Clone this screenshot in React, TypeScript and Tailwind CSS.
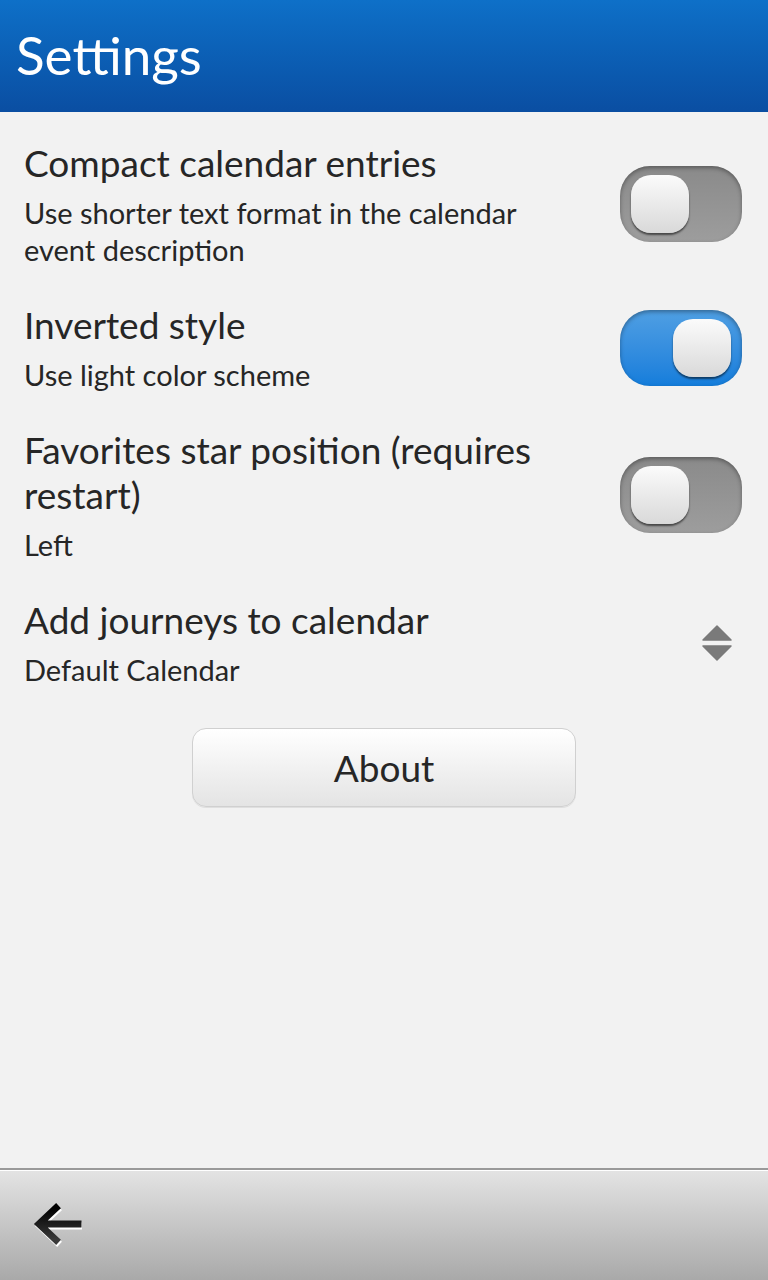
import React from 'react';

const font = { fontFamily: 'Lato, "Open Sans", sans-serif' };

function Toggle({ on }: { on: boolean }) {
  return (
    <div
      className={
        'relative h-[76px] w-[122px] shrink-0 rounded-[30px] shadow-[inset_0_2px_4px_rgba(0,0,0,0.35)] ' +
        (on
          ? 'bg-gradient-to-b from-[#4f9fe3] to-[#137ddb]'
          : 'bg-gradient-to-b from-[#8a8a8a] to-[#9d9d9d]')
      }
    >
      <div
        className={
          'absolute top-[9px] h-[58px] w-[58px] rounded-[20px] bg-gradient-to-b from-[#fbfbfb] to-[#d9d9d9] shadow-[0_2px_2px_rgba(0,0,0,0.55)] ' +
          (on ? 'left-[53px]' : 'left-[11px]')
        }
      />
    </div>
  );
}

function Row({
  title,
  desc,
  right,
}: {
  title: React.ReactNode;
  desc: React.ReactNode;
  right: React.ReactNode;
}) {
  return (
    <div className="flex items-center justify-between pl-6 pr-[26px]">
      <div className="flex w-[560px] flex-col">
        <div className="text-[37px] leading-[45px] text-[#262626]">{title}</div>
        <div className="mt-[9px] text-[29px] leading-[37px] text-[#262626]">{desc}</div>
      </div>
      {right}
    </div>
  );
}

export default function App() {
  return (
    <div className="flex h-[1280px] w-[768px] flex-col bg-[#f2f2f2]" style={font}>
      <div className="flex h-[112px] items-center bg-gradient-to-b from-[#0e70c8] to-[#0a4ea2] pl-[16px]">
        <h1 className="mt-[-3px] text-[53px] text-white">Settings</h1>
      </div>

      <div className="flex flex-1 flex-col gap-[34px] pt-[28px]">
        <Row
          title="Compact calendar entries"
          desc={
            <>
              Use shorter text format in the calendar
              <br />
              event description
            </>
          }
          right={<Toggle on={false} />}
        />
        <Row title="Inverted style" desc="Use light color scheme" right={<Toggle on={true} />} />
        <Row
          title={
            <>
              Favorites star position (requires
              <br />
              restart)
            </>
          }
          desc="Left"
          right={<Toggle on={false} />}
        />
        <Row
          title="Add journeys to calendar"
          desc="Default Calendar"
          right={
            <div className="mr-[10px] flex h-[36px] w-[30px] flex-col items-center justify-center gap-[4px]">
              <svg width="30" height="16" viewBox="0 0 30 16">
                <path d="M15 1 L29 15 L1 15 Z" fill="#7a7a7a" strokeLinejoin="round" stroke="#7a7a7a" strokeWidth="1.5" />
              </svg>
              <svg width="30" height="16" viewBox="0 0 30 16">
                <path d="M1 1 L29 1 L15 15 Z" fill="#7a7a7a" strokeLinejoin="round" stroke="#7a7a7a" strokeWidth="1.5" />
              </svg>
            </div>
          }
        />

        <div className="mt-[6px] flex justify-center">
          <button className="h-[79px] w-[384px] rounded-[14px] border border-[#d0d0d0] bg-gradient-to-b from-white to-[#e4e4e4] text-[37px] text-[#262626] shadow-[0_1px_0_rgba(0,0,0,0.08)]">
            About
          </button>
        </div>
      </div>

      <div className="flex h-[112px] items-center border-t-2 border-[#9a9a9a] bg-gradient-to-b from-[#e4e4e4] to-[#a9a9a9] pl-[32px] shadow-[inset_0_1px_0_#ffffff]">
        <svg width="50" height="44" viewBox="0 0 50 44">
          <defs>
            <linearGradient id="ag" x1="0" y1="0" x2="0" y2="1">
              <stop offset="0" stopColor="#000" />
              <stop offset="1" stopColor="#3a3a3a" />
            </linearGradient>
          </defs>
          <g fill="none" strokeWidth="7" strokeLinecap="square" strokeLinejoin="miter">
            <path d="M24 5 L7 21 L24 37 M9 21 L46 21" stroke="#ffffff" transform="translate(1,2)" />
            <path d="M24 5 L7 21 L24 37 M9 21 L46 21" stroke="url(#ag)" />
          </g>
        </svg>
      </div>
    </div>
  );
}
